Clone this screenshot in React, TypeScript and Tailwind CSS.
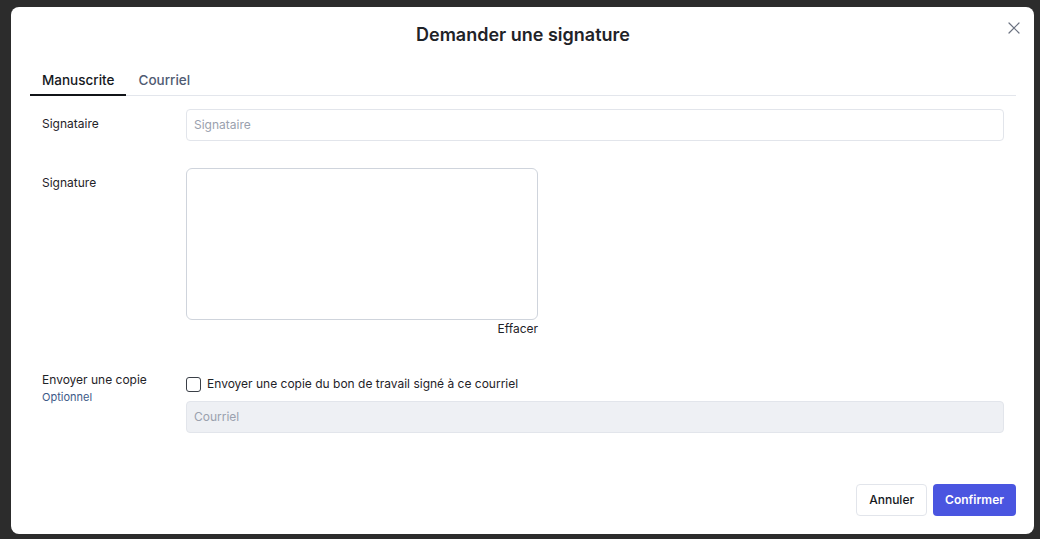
import React from "react";

export default function App() {
  return (
    <div
      className="w-[1040px] h-[539px] bg-[#2c2c2c] pl-[11px] pt-[7px] pr-[6px] pb-[5px]"
      style={{ fontFamily: "Inter, 'Noto Sans', sans-serif" }}
    >
      <div className="relative h-full w-full rounded-[8px] bg-white pl-[19px] pr-[18px] flex flex-col">
        <button className="absolute right-[12px] top-[13px] h-[16px] w-[16px] flex items-center justify-center text-[#6b7280]">
          <svg width="12" height="12" viewBox="0 0 12 12" fill="none" stroke="currentColor" strokeWidth="1.2" strokeLinecap="round">
            <path d="M1 1L11 11M11 1L1 11" />
          </svg>
        </button>
        <div className="h-[56px] flex items-center justify-center">
          <h2 className="text-[18px] leading-[28px] font-semibold text-[#1f2328]">Demander une signature</h2>
        </div>
        <div className="mt-[7px] flex border-b border-[#e3e6ec] text-[13.5px] leading-5 font-medium">
          <div className="px-3 pb-[4px] border-b-2 border-[#111418] -mb-px text-[#15181d]">Manuscrite</div>
          <div className="px-3 pb-[4px] text-[#4f5b72]">Courriel</div>
        </div>
        <div className="px-3 pt-[13px] text-[12px] leading-5 text-[#1f2328]">
          <div className="flex">
            <div className="w-[144px] pt-[5px]">Signataire</div>
            <div className="flex-1 h-8 rounded-[4px] border border-[#e2e5eb] px-[7px] flex items-center text-[#9aa1ae]">
              Signataire
            </div>
          </div>
          <div className="flex mt-[27px]">
            <div className="w-[144px] pt-[5px]">Signature</div>
            <div className="flex flex-col items-end">
              <div className="w-[352px] h-[152px] rounded-[6px] border border-[#cfd4dc]" />
              <div className="leading-4 pt-[1px]">Effacer</div>
            </div>
          </div>
          <div className="flex mt-[33px]">
            <div className="w-[144px]">
              <div className="leading-5">Envoyer une copie</div>
              <div className="mt-[1px] text-[11px] leading-3 text-[#3d5a88]">Optionnel</div>
            </div>
            <div className="flex-1 flex flex-col">
              <label className="flex items-center gap-[6px] h-5 mt-[4px]">
                <span className="w-[15px] h-[15px] rounded-[3px] border border-[#3a3f47] bg-white" />
                <span>Envoyer une copie du bon de travail signé à ce courriel</span>
              </label>
              <div className="mt-[7px] h-8 rounded-[4px] border border-[#e2e5eb] bg-[#eef0f4] px-[7px] flex items-center text-[#9aa1ae]">
                Courriel
              </div>
            </div>
          </div>
        </div>
        <div className="flex-1" />
        <div className="flex justify-end gap-[6px] pb-[18px] text-[12px] leading-5">
          <button className="h-8 px-[12px] rounded-[4px] border border-[#e2e5eb] bg-white font-medium text-[#15181d]">Annuler</button>
          <button className="h-8 px-[12px] rounded-[4px] bg-[#4a55e0] font-semibold text-white">Confirmer</button>
        </div>
      </div>
    </div>
  );
}
